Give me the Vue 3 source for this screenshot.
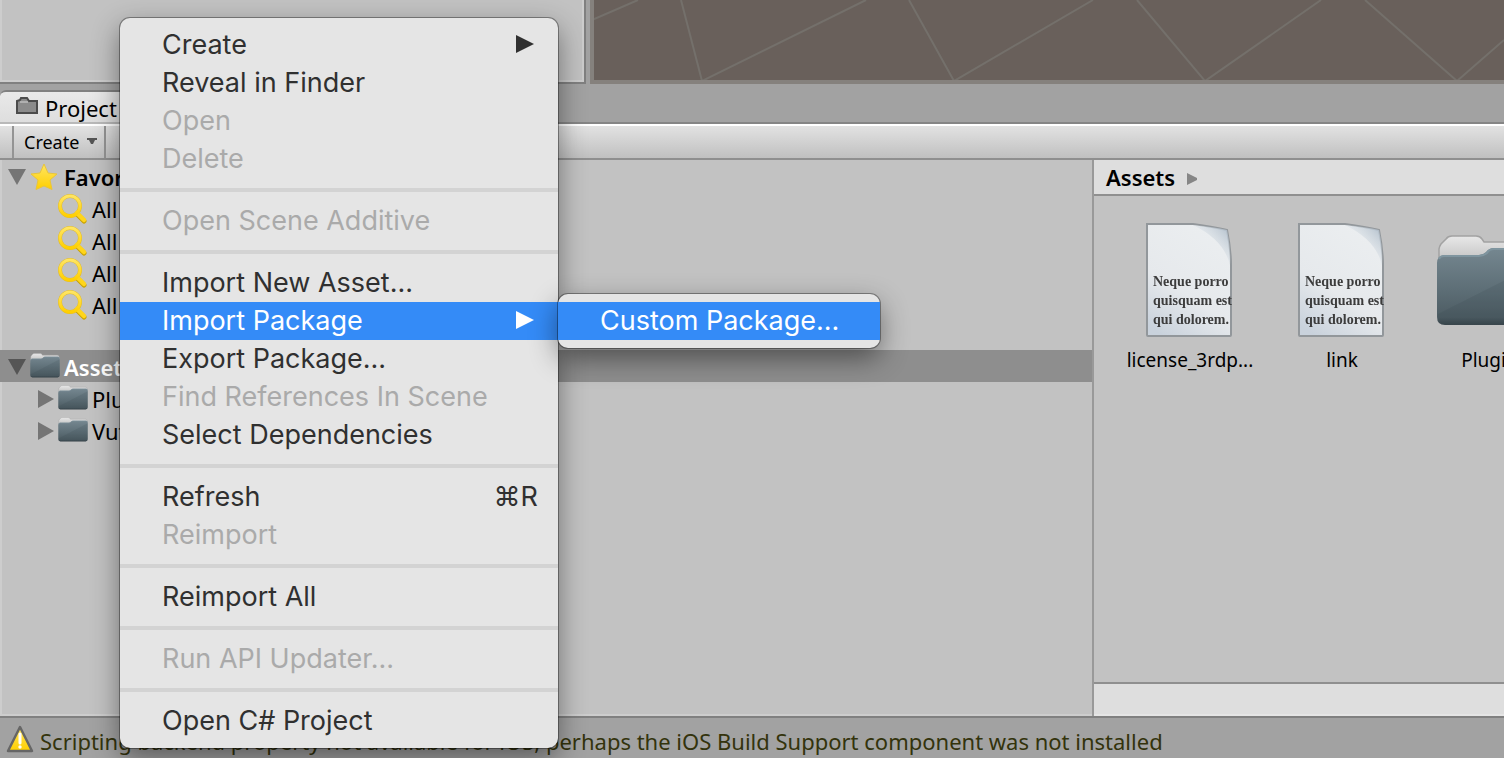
<script setup>
const groups = [
  [
    { label: 'Create', arrow: true },
    { label: 'Reveal in Finder' },
    { label: 'Open', disabled: true },
    { label: 'Delete', disabled: true },
  ],
  [{ label: 'Open Scene Additive', disabled: true }],
  [
    { label: 'Import New Asset...' },
    { label: 'Import Package', arrow: true, active: true, sub: ['Custom Package...'] },
    { label: 'Export Package...' },
    { label: 'Find References In Scene', disabled: true },
    { label: 'Select Dependencies' },
  ],
  [{ label: 'Refresh', key: '⌘R' }, { label: 'Reimport', disabled: true }],
  [{ label: 'Reimport All' }],
  [{ label: 'Run API Updater...', disabled: true }],
  [{ label: 'Open C# Project' }],
]
const favorites = ['All Materials', 'All Models', 'All Prefabs', 'All Scripts']
const folders = ['Plugins', 'Vuforia']
const assets = [
  { name: 'license_3rdp...', kind: 'doc' },
  { name: 'link', kind: 'doc' },
  { name: 'Plugins', kind: 'folder' },
]
</script>

<template>
  <div class="editor">
    <svg class="defs" aria-hidden="true">
      <defs>
        <linearGradient id="gold" x1="0" y1="0" x2="0" y2="1">
          <stop offset="0" stop-color="#ffe562" /><stop offset="1" stop-color="#ffcf00" />
        </linearGradient>
        <linearGradient id="slate" x1="0" y1="0" x2="0" y2="1">
          <stop offset="0" stop-color="#758790" /><stop offset="0.55" stop-color="#5d6e76" /><stop offset="0.9" stop-color="#4d5c63" /><stop offset="1" stop-color="#38454b" />
        </linearGradient>
        <linearGradient id="tabPaper" x1="0" y1="0" x2="0" y2="1">
          <stop offset="0" stop-color="#e8e8e8" /><stop offset="1" stop-color="#b4b4b4" />
        </linearGradient>
        <linearGradient id="paper" x1="0.7" y1="0" x2="0.2" y2="1">
          <stop offset="0" stop-color="#ebeef0" /><stop offset="0.6" stop-color="#e6e9ec" /><stop offset="1" stop-color="#c9d2dc" />
        </linearGradient>
        <linearGradient id="curl" x1="1" y1="0" x2="0.35" y2="0.65">
          <stop offset="0" stop-color="#a9b8c6" /><stop offset="1" stop-color="#e9edf0" stop-opacity="0.3" />
        </linearGradient>
        <symbol id="folder" viewBox="0 0 128 128">
          <g transform="translate(0 11)">
            <path d="M9 39V28Q9 26 11 23L16 18Q18 15 22 15H46Q50 15 52 18L54 21H112Q119 21 119 29V50H9Z" fill="url(#tabPaper)" stroke="#a2a2a2" stroke-width="1.5" />
            <path d="M7 42Q7 35 14 34H49Q53 34 56 31Q59 27 64 27H114Q121 27 121 34V96Q121 104 113 104H15Q7 104 7 96Z" fill="url(#slate)" />
            <path d="M9 38Q10 35 14 35H49Q53 35 57 32Q59 28 64 28H114Q120 28 120 34" fill="none" stroke="#7f959f" stroke-width="2" />
            <path d="M8 93L121 36V96Q121 103 113 103H15Q8 103 8 96Z" fill="#2b3a42" opacity="0.13" />
          </g>
        </symbol>
        <symbol id="doc" viewBox="0 0 128 128">
          <g transform="translate(0 2)">
            <path d="M21 12H67Q88 15 101 18Q105 38 105 53V123Q105 124 104 124H22Q21 124 21 123Z" fill="url(#paper)" stroke="#92979b" stroke-width="2" />
            <path d="M67 13Q88 15 101 18Q105 38 104 53Q98 28 67 13Z" fill="url(#curl)" />
            <g class="doc-text"><text x="27" y="74">Neque porro</text><text x="27" y="93">quisquam est</text><text x="27" y="112">qui dolorem.</text></g>
          </g>
        </symbol>
      </defs>
    </svg>

    <section class="top">
      <div class="inspector"></div>
      <div class="scene">
        <svg viewBox="594 0 910 82" preserveAspectRatio="xMinYMin slice" aria-hidden="true">
          <path d="M592 20L638 0M681 0L702 81L866 0M909 0L954 81L1093 0M1137 0L1205 81L1321 0M1365 0L1457 81L1504 40" />
        </svg>
      </div>
    </section>

    <div class="tabs">
      <button class="tab" type="button">
        <svg width="24" height="20" viewBox="0 0 24 20" aria-hidden="true">
          <path d="M2 17V5L5 4L6 2H12L14 5H22V17Z" fill="#8b8b8b" stroke="#4b4b4b" stroke-width="2" />
          <path d="M5 6H13" stroke="#b0b0b0" stroke-width="2" />
        </svg>
        Project
      </button>
    </div>
    <div class="toolbar">
      <button class="create" type="button">Create
        <svg width="10" height="8" viewBox="0 0 10 8" aria-hidden="true"><path d="M0 0H10V2H8L6 6H4L2 2H0Z" fill="#555" /></svg>
      </button>
    </div>

    <main class="body">
      <nav class="tree">
        <div class="row root">
          <svg class="tri" viewBox="0 0 18 16"><path d="M0 0H18L9 16Z" /></svg>
          <svg class="star" viewBox="0 0 28 28"><path d="M14 1L18 10L27 11L20 17L22 26.500L14 23L6 26.500L8 17L1 11L10 10Z" fill="url(#gold)" stroke="#e9c53a" stroke-width="1" /></svg>
          <span>Favorites</span>
        </div>
        <div v-for="f in favorites" :key="f" class="row find">
          <svg class="glass" viewBox="0 0 30 30"><path d="M19 20L26 27" stroke="#c9a200" stroke-width="5" stroke-linecap="round" /><circle cx="12" cy="12" r="10" fill="none" stroke="#e0bb2c" stroke-width="4" /><path d="M19 19L26 26" stroke="#ffd51a" stroke-width="4.500" stroke-linecap="round" /><circle cx="12" cy="12" r="10" fill="none" stroke="url(#gold)" stroke-width="3" /></svg>
          <span>{{ f }}</span>
        </div>
        <div class="row root selected">
          <svg class="tri" viewBox="0 0 18 16"><path d="M0 0H18L9 16Z" /></svg>
          <svg class="small-folder" viewBox="6 24 116 93" preserveAspectRatio="none"><use href="#folder" width="128" height="128" /></svg>
          <span>Assets</span>
        </div>
        <div v-for="f in folders" :key="f" class="row child">
          <svg class="tri side" viewBox="0 0 16 18"><path d="M0 0V18L16 9Z" /></svg>
          <svg class="small-folder" viewBox="6 24 116 93" preserveAspectRatio="none"><use href="#folder" width="128" height="128" /></svg>
          <span>{{ f }}</span>
        </div>
      </nav>
      <section class="content">
        <header class="crumbs">Assets
          <svg width="10" height="12" viewBox="0 0 10 12" aria-hidden="true"><path d="M0 0V12L10 7V5Z" fill="#868686" /></svg>
        </header>
        <div class="grid">
          <figure v-for="a in assets" :key="a.name" class="asset">
            <svg width="128" height="128" viewBox="0 0 128 128"><use :href="'#' + a.kind" /></svg>
            <figcaption>{{ a.name }}</figcaption>
          </figure>
        </div>
        <div class="slider"></div>
      </section>
    </main>

    <footer class="status">
      <svg width="28" height="30" viewBox="0 0 28 30" aria-hidden="true">
        <path d="M14 3L26 27H2Z" fill="url(#gold)" stroke="#666" stroke-width="2.500" stroke-linejoin="round" />
        <path d="M14 10V19" stroke="#fff" stroke-width="3" stroke-linecap="round" /><circle cx="14" cy="23" r="1.700" fill="#fff" />
      </svg>
      <span>Scripting backend property not available for iOS, perhaps the iOS Build Support component was not installed</span>
    </footer>

    <div class="menu panel" role="menu">
      <div v-for="(g, i) in groups" :key="i" class="group">
        <div v-for="it in g" :key="it.label" class="slot">
          <button class="item" :class="{ active: it.active }" :disabled="it.disabled" type="button" role="menuitem">
            <span>{{ it.label }}</span>
            <svg v-if="it.arrow" class="more" viewBox="0 0 18 18"><path d="M0 0V18L18 9Z" /></svg>
            <span v-if="it.key" class="key">{{ it.key }}</span>
          </button>
          <div v-if="it.sub" class="submenu panel" role="menu">
            <button v-for="s in it.sub" :key="s" class="item active" type="button" role="menuitem">{{ s }}</button>
          </div>
        </div>
      </div>
    </div>
  </div>
</template>

<style>
body { margin: 0; background: #a0a0a0; }
</style>

<style scoped>
.editor {
  position: relative;
  display: flex;
  flex-direction: column;
  min-height: 100vh;
  overflow: hidden;
  box-sizing: border-box;
  background: #a2a2a2;
  color: #000;
  font-family: "Noto Sans", "Open Sans", sans-serif;
  font-size: 22px;
}
button { margin: 0; border: 0; background: none; color: inherit; font: inherit; text-align: left; white-space: nowrap; }
svg { flex: none; display: block; }
.defs { position: absolute; width: 0; height: 0; }
.doc-text { font: bold 14px "Liberation Serif", serif; fill: #3c3c3c; filter: blur(0.6px); }

.top { display: flex; gap: 4px; height: 84px; }
.inspector { box-sizing: border-box; flex: none; width: 586px; background: #c2c2c2; border: solid #808080; border-width: 0 2px 2px 0; box-shadow: inset 2px 0 #cdcdcd, inset -2px -2px #cdcdcd; }
.scene { flex: 1; min-width: 0; box-sizing: border-box; border: solid #85817d; border-width: 0 0 4px 4px; background: #69605b; overflow: hidden; }
.scene svg { width: 100%; height: 82px; }
.scene path { fill: none; stroke: #74706b; stroke-width: 2; }

.tabs { display: flex; align-items: flex-end; height: 40px; box-sizing: border-box; border-bottom: 2px solid #858585; }
.tab { display: flex; align-items: center; gap: 6px; width: 160px; height: 34px; margin-bottom: -2px; padding: 2px 0 0 15px; box-sizing: border-box; border-top: 2px solid #808080; border-bottom: 2px solid #b9b9b9; border-radius: 6px 6px 0 0; background: linear-gradient(#e9e9e9, #dedede); }
.tab svg { margin-bottom: 4px; }
.toolbar { display: flex; height: 36px; box-sizing: border-box; padding-left: 12px; border-top: 2px solid #fff; border-bottom: 2px solid #8f8f8f; background: linear-gradient(#e2e2e2, #c0c0c0); }
.create { display: flex; align-items: center; gap: 8px; width: 94px; padding: 0 0 0 10px; border: solid #949494; border-width: 0 2px; box-sizing: border-box; font-size: 18px; }

.body { display: flex; flex: 1; background: #c2c2c2; box-shadow: inset 2px -2px #cdcdcd; }
.tree { flex: 1092; box-sizing: border-box; border-right: 2px solid #999; }
.row { display: flex; align-items: center; height: 32px; box-sizing: border-box; padding-top: 2px; }
.root { gap: 4px; padding-left: 8px; font-weight: 600; }
.find { gap: 4px; padding-left: 58px; }
.child { gap: 4px; padding-left: 38px; }
.star + span { margin-left: 2px; }
.selected { margin-top: 30px; background: #8e8e8e; color: #fff; }
.tri { width: 18px; height: 16px; fill: #757575; }
.tri.side { width: 16px; height: 18px; }
.selected .tri { fill: #555; }
.star { width: 28px; height: 28px; }
.glass { width: 30px; height: 30px; }
.small-folder { width: 30px; height: 25px; margin-bottom: 4px; }

.content { flex: 410; min-width: 0; display: flex; flex-direction: column; overflow: hidden; }
.crumbs { display: flex; align-items: center; gap: 12px; height: 36px; padding-left: 12px; box-sizing: border-box; border-bottom: 2px solid #8f8f8f; background: #dedede; font-weight: 600; }
.crumbs svg { margin-top: 4px; }
.grid { flex: 1; display: flex; gap: 24px; padding: 14px 0 0 32px; }
.asset { flex: none; width: 128px; margin: 0; }
.asset figcaption { margin: 8px -8px 0; text-align: center; font-size: 19px; line-height: 28px; }
.slider { height: 30px; border-top: 2px solid #8f8f8f; border-bottom: 2px solid #e5e5e5; background: #dedede; }

.status { display: flex; align-items: center; gap: 6px; height: 42px; padding: 6px 6px 0; box-sizing: border-box; border-top: 2px solid #808080; color: #33330c; white-space: nowrap; }
.status svg { margin-bottom: 4px; }

.panel { background: #e5e5e5; border-radius: 10px; padding: 8px 0; box-shadow: 0 0 0 1px rgba(0, 0, 0, 0.35), 0 10px 28px rgba(0, 0, 0, 0.45); }
.menu { position: absolute; left: 120px; top: 18px; width: 438px; color: #303030; font-family: Inter, Roboto, sans-serif; font-size: 27px; }
.group + .group { margin-top: 10px; padding-top: 10px; border-top: 4px solid #d3d3d3; }
.slot { position: relative; }
.item { display: flex; align-items: center; justify-content: space-between; box-sizing: border-box; width: 100%; height: 38px; padding: 0 20px 2px 42px; }
.item:disabled { color: #aaa; }
.item.active { background: #348bf7; color: #fff; }
.more { width: 18px; height: 18px; margin-right: 4px; fill: currentColor; }
.submenu { position: absolute; left: 100%; top: -8px; width: 322px; }
</style>
